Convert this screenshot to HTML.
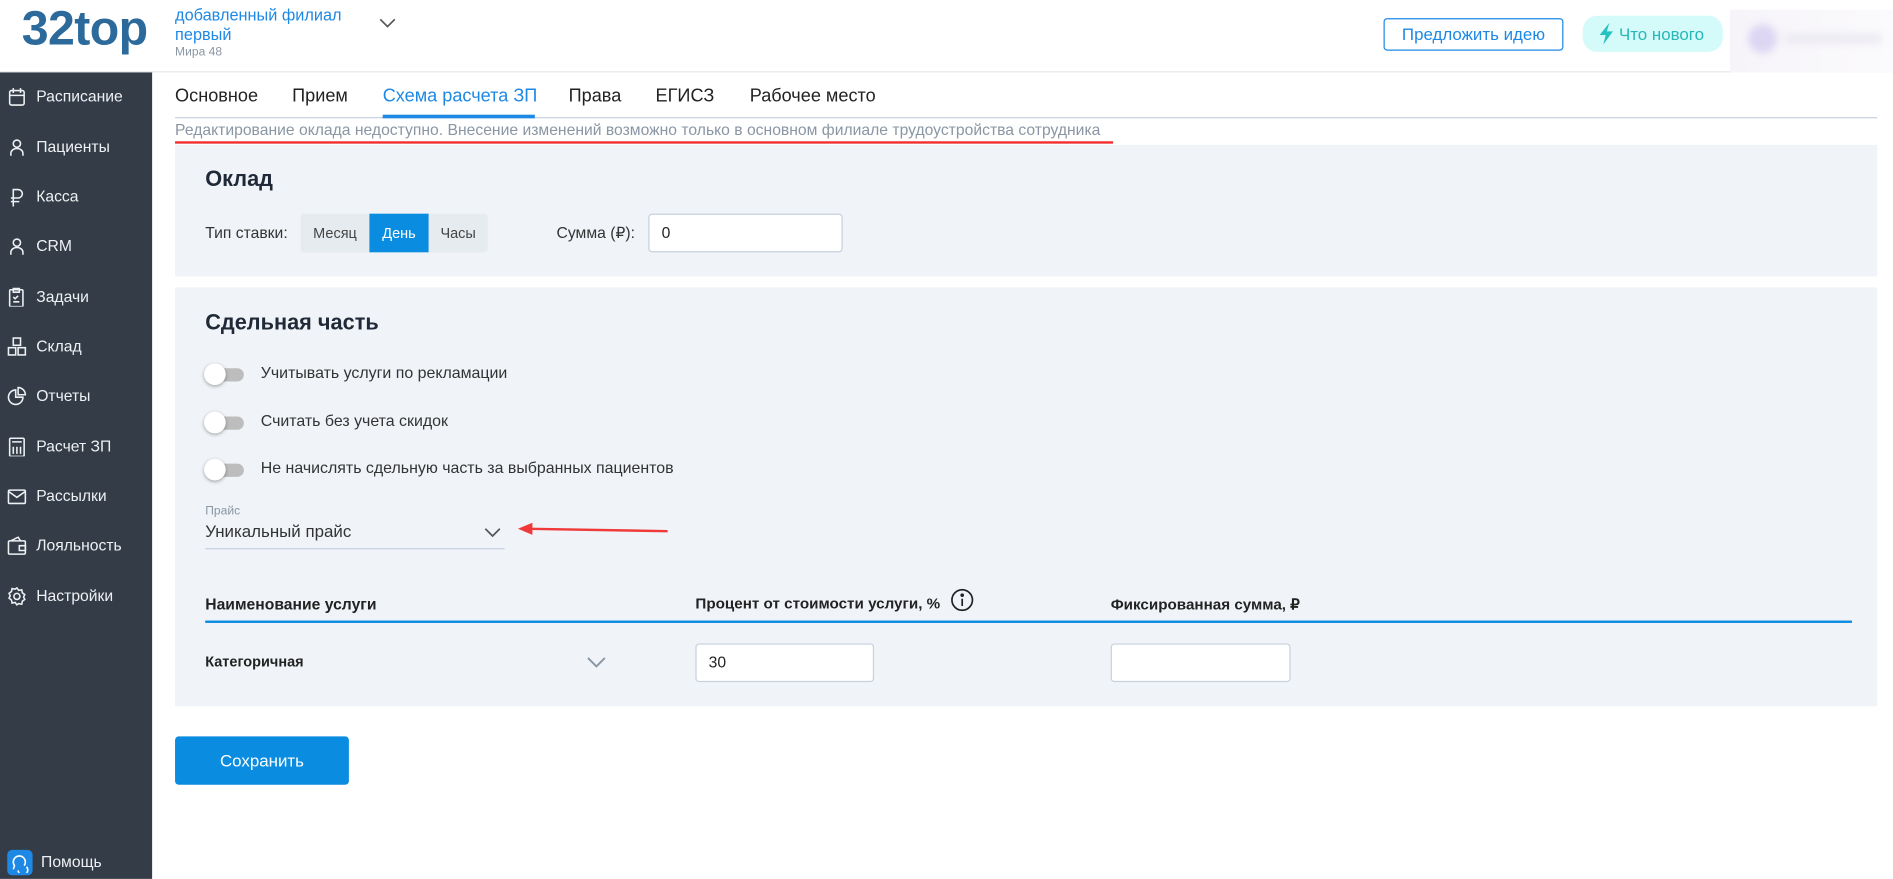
<!DOCTYPE html>
<html><head><meta charset="utf-8"><style>
*{box-sizing:border-box;margin:0;padding:0}
body{width:1893px;height:879px;overflow:hidden;background:#fff;font-family:"Liberation Sans",sans-serif}
#r{position:absolute;left:0;top:0;width:1568px;height:728px;transform:scale(1.20727);transform-origin:0 0}
.a{position:absolute;white-space:nowrap}
.side{position:absolute;left:0;top:60px;width:126px;height:668px;background:#333c47}
.si{position:absolute;left:0;height:20px;width:126px;color:#eef1f4;font-size:13px;line-height:20px;white-space:nowrap}
.si svg{position:absolute;left:6px;top:2px}
.si span{position:absolute;left:30px}
.tab{position:absolute;top:71px;font-size:15px;color:#222}
.card{position:absolute;left:145px;width:1410px;background:#f0f4f8}
.tg{position:absolute;left:169px;width:34px;height:20px}
.tg:before{content:"";position:absolute;left:3px;top:5px;width:30px;height:11px;border-radius:6px;background:#bdbdbd}
.tg:after{content:"";position:absolute;left:0;top:1px;width:18px;height:18px;border-radius:50%;background:#fff;box-shadow:0 1px 3px rgba(0,0,0,.35)}
.lbl{position:absolute;left:216px;font-size:13.2px;color:#333}
.inp{position:absolute;background:#fff;border:1px solid #c7d0db;border-radius:3px;font-size:13px;color:#222;padding-left:10px;line-height:30px}
</style></head><body><div id="r">
<div class="a" style="left:0;top:0;width:1568px;height:60px;border-bottom:1px solid #e3e6ea"></div>
<div class="a" style="left:18px;top:2px;font-size:40px;font-weight:bold;color:#2b6a9b;letter-spacing:-0.5px">32top</div>
<div class="a" style="left:145px;top:5px;font-size:13.5px;color:#1e88e5;line-height:16px">добавленный филиал<br>первый</div>
<div class="a" style="left:145px;top:38px;font-size:10px;color:#8a96a3">Мира 48</div>
<svg class="a" style="left:314px;top:13px" width="14" height="12"><path d="M1 3l6 6 6-6" fill="none" stroke="#555" stroke-width="1.4"/></svg>
<div class="a" style="left:1146px;top:15px;width:149px;height:27px;border:1px solid #1e88e5;border-radius:3px;color:#1e88e5;font-size:14px;text-align:center;line-height:25px">Предложить идею</div>
<div class="a" style="left:1311px;top:13px;width:116px;height:30px;background:#d4fafa;border-radius:12px;color:#26b8b8;font-size:14px;line-height:30px;padding-left:30px">Что нового</div>
<svg class="a" style="left:1324px;top:19px" width="14" height="18"><path d="M9 0L1 10h5l-2 8 8-11H7z" fill="#26c2c2"/></svg>
<div class="a" style="left:1433px;top:8px;width:135px;height:52px;background:linear-gradient(90deg,#f6f4f9,#fbfafc)"></div>
<div class="a" style="left:1448px;top:20px;width:24px;height:24px;border-radius:50%;background:#dcd6f3;filter:blur(3px)"></div>
<div class="a" style="left:1478px;top:28px;width:80px;height:8px;background:#eceaf2;filter:blur(3px)"></div>

<div class="side"></div>
<div class="si" style="top:70px"><svg width="16" height="16" fill="none" stroke="#eef1f4" stroke-width="1.3"><rect x="2" y="3" width="12" height="12" rx="1.5"/><path d="M2 7h12M5 1v4M11 1v4"/></svg><span>Расписание</span></div>
<div class="si" style="top:112px"><svg width="16" height="16" fill="none" stroke="#eef1f4" stroke-width="1.3"><circle cx="8" cy="5" r="3"/><path d="M3 15v-2a5 4 0 0110 0v2"/></svg><span>Пациенты</span></div>
<div class="si" style="top:153px"><svg width="16" height="16" fill="none" stroke="#eef1f4" stroke-width="1.3"><path d="M5 16V2h4a3.5 3.5 0 010 7H3M3 12h7"/></svg><span>Касса</span></div>
<div class="si" style="top:194px"><svg width="16" height="16" fill="none" stroke="#eef1f4" stroke-width="1.3"><circle cx="8" cy="5" r="3"/><path d="M3 15v-2a5 4 0 0110 0v2"/></svg><span>CRM</span></div>
<div class="si" style="top:236px"><svg width="16" height="16" fill="none" stroke="#eef1f4" stroke-width="1.3"><rect x="2" y="2" width="11" height="14" rx="1"/><path d="M5 1h5v3H5zM5 8l1.5 1.5L9 7M5 12h5"/></svg><span>Задачи</span></div>
<div class="si" style="top:277px"><svg width="16" height="16" fill="none" stroke="#eef1f4" stroke-width="1.3"><rect x="5" y="1" width="6" height="6"/><rect x="1" y="9" width="6" height="6"/><rect x="9" y="9" width="6" height="6"/></svg><span>Склад</span></div>
<div class="si" style="top:318px"><svg width="16" height="16" fill="none" stroke="#eef1f4" stroke-width="1.3"><path d="M7 3a6 6 0 106 6H7z"/><path d="M9 1v6h6a6 6 0 00-6-6z"/></svg><span>Отчеты</span></div>
<div class="si" style="top:360px"><svg width="16" height="16" fill="none" stroke="#eef1f4" stroke-width="1.3"><rect x="2" y="1" width="12" height="15" rx="1"/><path d="M4 4h8M5 8v6M8 8v6M11 8v6"/></svg><span>Расчет ЗП</span></div>
<div class="si" style="top:401px"><svg width="16" height="16" fill="none" stroke="#eef1f4" stroke-width="1.3"><rect x="1" y="3" width="14" height="11" rx="1"/><path d="M1 4l7 5 7-5"/></svg><span>Рассылки</span></div>
<div class="si" style="top:442px"><svg width="16" height="16" fill="none" stroke="#eef1f4" stroke-width="1.3"><rect x="1" y="4" width="14" height="11" rx="1"/><path d="M3 4l6-3 2 3M10 8h5v4h-5z"/></svg><span>Лояльность</span></div>
<div class="si" style="top:484px"><svg width="16" height="16" fill="none" stroke="#eef1f4" stroke-width="1.3"><circle cx="8" cy="8" r="2.5"/><path d="M8 1l1.5 2 2.5-.5.5 2.5 2 1.5-1 2 1 2-2 1.5-.5 2.5-2.5-.5L8 15l-1.5-2-2.5.5-.5-2.5-2-1.5 1-2-1-2 2-1.5.5-2.5 2.5.5z"/></svg><span>Настройки</span></div>
<div class="a" style="left:6px;top:704px;width:21px;height:21px;background:#1e88e5;border-radius:4px"></div>
<svg class="a" style="left:8px;top:706px" width="17" height="17" fill="none" stroke="#fff" stroke-width="1.3"><path d="M3 14l1-3a5 5 0 118 0"/><path d="M7 15a4 4 0 107-3"/></svg>
<div class="a" style="left:34px;top:706px;font-size:13px;color:#eef1f4">Помощь</div>

<div class="tab" style="left:145px">Основное</div>
<div class="tab" style="left:242px">Прием</div>
<div class="tab" style="left:317px;color:#1e88e5">Схема расчета ЗП</div>
<div class="tab" style="left:471px">Права</div>
<div class="tab" style="left:543px">ЕГИСЗ</div>
<div class="tab" style="left:621px">Рабочее место</div>
<div class="a" style="left:145px;top:97px;width:1410px;height:1px;background:#c5d2de"></div>
<div class="a" style="left:317px;top:95px;width:126px;height:3px;background:#1e88e5"></div>
<div class="a" style="left:145px;top:100px;font-size:13px;color:#8a96a3">Редактирование оклада недоступно. Внесение изменений возможно только в основном филиале трудоустройства сотрудника</div>
<div class="a" style="left:145px;top:117px;width:777px;height:2px;background:#f03030"></div>

<div class="card" style="top:120px;height:109px"></div>
<div class="a" style="left:170px;top:138px;font-size:18px;font-weight:bold;color:#1f2937">Оклад</div>
<div class="a" style="left:170px;top:185px;font-size:13px;color:#333">Тип ставки:</div>
<div class="a" style="left:249px;top:177px;width:155px;height:32px;background:#e6ebf0;border-radius:3px"></div>
<div class="a" style="left:249px;top:177px;width:57px;height:32px;font-size:12px;color:#444;text-align:center;line-height:32px">Месяц</div>
<div class="a" style="left:306px;top:177px;width:49px;height:32px;background:#0a8ce0;color:#fff;font-size:12px;text-align:center;line-height:32px">День</div>
<div class="a" style="left:355px;top:177px;width:49px;height:32px;font-size:12px;color:#444;text-align:center;line-height:32px">Часы</div>
<div class="a" style="left:461px;top:185px;font-size:13px;color:#333">Сумма (₽):</div>
<div class="inp" style="left:537px;top:177px;width:161px;height:32px">0</div>

<div class="card" style="top:238px;height:347px"></div>
<div class="a" style="left:170px;top:257px;font-size:18px;font-weight:bold;color:#1f2937">Сдельная часть</div>
<div class="tg" style="top:300px"></div><div class="lbl" style="top:301px">Учитывать услуги по рекламации</div>
<div class="tg" style="top:340px"></div><div class="lbl" style="top:341px">Считать без учета скидок</div>
<div class="tg" style="top:379px"></div><div class="lbl" style="top:380px">Не начислять сдельную часть за выбранных пациентов</div>
<div class="a" style="left:170px;top:418px;font-size:10px;color:#8a96a3">Прайс</div>
<div class="a" style="left:170px;top:432px;font-size:14px;color:#333">Уникальный прайс</div>
<svg class="a" style="left:401px;top:436px" width="14" height="10"><path d="M1 2l6 6 6-6" fill="none" stroke="#555" stroke-width="1.4"/></svg>
<div class="a" style="left:170px;top:454px;width:248px;height:1px;background:#c5cde0"></div>
<svg class="a" style="left:425px;top:430px" width="132" height="16"><path d="M14 8L128 10" stroke="#f03a3a" stroke-width="2"/><path d="M4 8l12-5v10z" fill="#f03a3a"/></svg>

<div class="a" style="left:170px;top:493px;font-size:13px;font-weight:bold;color:#222">Наименование услуги</div>
<div class="a" style="left:576px;top:493px;font-size:12.6px;font-weight:bold;color:#222">Процент от стоимости услуги, %</div>
<svg class="a" style="left:787px;top:487px" width="20" height="20" fill="none" stroke="#222" stroke-width="1.4"><circle cx="10" cy="10" r="8.5"/><path d="M10 9v6"/><circle cx="10" cy="6" r=".8" fill="#222"/></svg>
<div class="a" style="left:920px;top:493px;font-size:12.6px;font-weight:bold;color:#222">Фиксированная сумма, ₽</div>
<div class="a" style="left:170px;top:514px;width:1364px;height:2px;background:#0a8ce0"></div>
<div class="a" style="left:170px;top:541px;font-size:12px;font-weight:bold;color:#222">Категоричная</div>
<svg class="a" style="left:486px;top:543px" width="16" height="11"><path d="M1 2l7 7 7-7" fill="none" stroke="#8a96a3" stroke-width="1.6"/></svg>
<div class="inp" style="left:576px;top:533px;width:148px;height:32px">30</div>
<div class="inp" style="left:920px;top:533px;width:149px;height:32px"></div>

<div class="a" style="left:145px;top:610px;width:144px;height:40px;background:#0a8ce0;border-radius:3px;color:#fff;font-size:14px;text-align:center;line-height:40px">Сохранить</div>
</div></body></html>
